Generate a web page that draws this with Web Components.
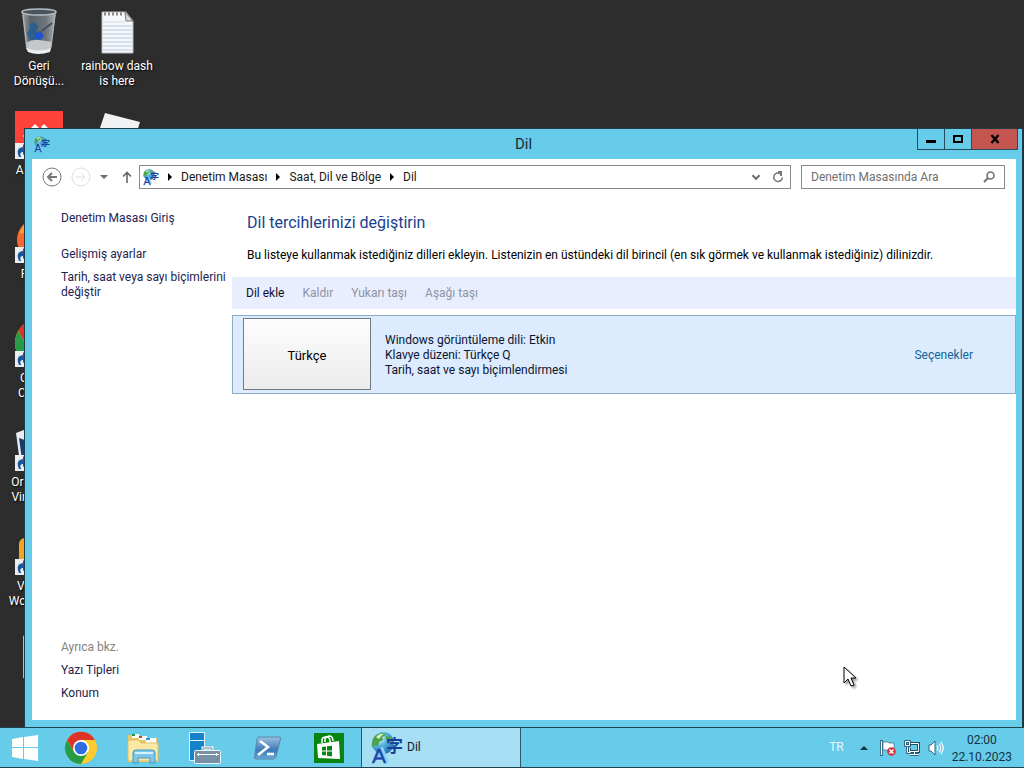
<!DOCTYPE html>
<html lang="tr">
<head>
<meta charset="utf-8">
<title>Dil</title>
<style>
  html, body {
    height: 100%;
    margin: 0;
    overflow: hidden;
  }
  body {
    font: 12px/15px Roboto, "Noto Sans", sans-serif;
    color: #000;
    background: #2d2d2d;
  }
</style>
</head>
<body>
<desktop-screen>
  <desktop-icon icon="bin">Geri Dönüşü...</desktop-icon>
  <desktop-icon icon="anydesk" shortcut>AnyDesk</desktop-icon>
  <desktop-icon icon="firefox" shortcut>Firefox</desktop-icon>
  <desktop-icon icon="chrome" shortcut>Google Chrome</desktop-icon>
  <desktop-icon icon="vbox" shortcut>Oracle VM VirtualBox</desktop-icon>
  <desktop-icon icon="vmware" shortcut>VMware Workstati...</desktop-icon>
  <desktop-icon icon="frame"></desktop-icon>
  <desktop-icon icon="notes">rainbow dash is here</desktop-icon>
  <desktop-icon icon="sheet"></desktop-icon>

  <app-window slot="window" heading="Dil" icon="lang">
    <address-bar slot="nav"></address-bar>
    <side-panel slot="side"></side-panel>
    <language-page></language-page>
  </app-window>

  <mouse-pointer slot="window"></mouse-pointer>

  <task-bar slot="bar">
    <task-button icon="chrome" label="Google Chrome"></task-button>
    <task-button icon="explorer" label="Dosya Gezgini"></task-button>
    <task-button icon="server" label="Sunucu Yöneticisi"></task-button>
    <task-button icon="powershell" label="PowerShell"></task-button>
    <task-button icon="store" label="Mağaza"></task-button>
    <task-button icon="lang" label="Dil" active>Dil</task-button>
    <system-tray slot="tray"></system-tray>
  </task-bar>
</desktop-screen>

<script>
const ICONS = {
  lang: /*html*/`<svg viewBox="0 0 32 32">
    <defs><radialGradient id="g" cx=".35" cy=".3" r=".8"><stop offset="0" stop-color="#e8fbff"/><stop offset=".4" stop-color="#58b4e0"/><stop offset="1" stop-color="#1b65ab"/></radialGradient></defs>
    <circle cx="12" cy="11" r="11" fill="url(#g)"/>
    <path d="M3 5q4-4 9-4l3 2-4 2 1 3-4 2-1 4-4-1-2 3q-1-5 2-11zM15 4l5 1 2 4-4 1-3-2z" fill="#4ba548"/>
    <path d="M5 5q4-4 8-3-4 2-5 5z" fill="#dff5cb"/>
    <path d="M4 30L10 15h2l6 15h-3l-7-5z" fill="#8fd0ee"/>
    <text x="15" y="20" font-family="Noto Sans CJK JP, sans-serif" font-size="17" font-weight="700" fill="#173f9b">字</text>
    <text x="1" y="31" font-family="Liberation Sans, sans-serif" font-size="21" fill="#1747ad" stroke="#1747ad" stroke-width=".5">A</text>
  </svg>`,
  bin: /*html*/`<svg viewBox="0 0 48 48">
    <defs><linearGradient id="b"><stop offset="0" stop-color="#9ba4ab"/><stop offset=".25" stop-color="#596169"/><stop offset=".7" stop-color="#6e767c"/><stop offset="1" stop-color="#aab0b5"/></linearGradient></defs>
    <path d="M7 5l4 37q13 6 25 0l5-37z" fill="url(#b)"/>
    <path d="M15 17l5-2 3 5-2 5 5-1 2 6-6 4-7-1-3-7 3-4z" fill="#2d5f8d"/>
    <path d="M20 26l6-1 3 4-4 4-5-2z" fill="#1f50d0"/>
    <path d="M27 24l10-8" stroke="#41505d" stroke-width="2"/>
    <path d="M11 36q6-4 13-3t13 2l-2 7q-12 5-23 0z" fill="#c4c8cb"/>
    <path d="M11 41q13 5 25 0l-1 4q-12 4-22 0z" fill="#eceeef"/>
    <ellipse cx="24" cy="5" rx="17" ry="3" fill="#49545d" stroke="#b4bcc1" stroke-width="1.500"/>
    <path d="M8 8l4 33M40 8l-4 33" stroke="#b4bbc0" fill="none"/>
  </svg>`,
  notes: /*html*/`<svg viewBox="0 0 48 48">
    <path d="M9 5h24l7 9v32H9z" fill="#f6f8fb" stroke="#b5bac0"/>
    <path d="M10 19h29M10 23h29M10 27h29M10 31h29M10 35h29M10 39h29M10 43h29" stroke="#b7c9dd"/>
    <path d="M10 15h22" stroke="#cfdae6"/>
    <path d="M32 5l1 9h7z" fill="#dcdcdc" stroke="#777"/>
    <path d="M11 7h20" stroke="#888" stroke-width="3" stroke-dasharray="2 2"/>
  </svg>`,
  sheet: /*html*/`<svg viewBox="0 0 48 48"><path d="M12 2l35 9-5 16-36-7z" fill="#f1f2f3"/></svg>`,
  anydesk: /*html*/`<svg viewBox="0 0 48 48"><path d="M0 0h48v48H0z" fill="#fc423b"/><path d="M20 13l12 12-12 12L8 25z" fill="#fff"/><path d="M26 16l3-3 12 12-12 12-3-3 9-9z" fill="#fff"/></svg>`,
  firefox: /*html*/`<svg viewBox="0 0 48 48"><circle cx="24" cy="25" r="22" fill="#f9692b"/><path d="M4 19Q8 8 17 3l3 12z" fill="#ff9b35"/><circle cx="26" cy="27" r="13" fill="#7542c9"/></svg>`,
  chrome: /*html*/`<svg viewBox="0 0 32 32">
    <circle cx="16" cy="16" r="16" fill="#ffcb2d"/>
    <path d="M16 8H30A16 16 0 0 0 2.140 8l7 12z" fill="#dc3528"/>
    <path d="M2.140 8A16 16 0 0 0 16 32l7-12-7-1-7 1z" fill="#279b46"/>
    <circle cx="16" cy="16" r="8" fill="#fff"/><circle cx="16" cy="16" r="6.300" fill="#2f6de0"/>
  </svg>`,
  vbox: /*html*/`<svg viewBox="0 0 48 48"><path d="M1 10L24 1l23 9-4 30-19 7-19-7z" fill="#e9edf2"/><path d="M4 15l20 7v22L7 37z" fill="#173e73"/><path d="M44 15l-20 7v22l17-7z" fill="#2868a6"/></svg>`,
  vmware: /*html*/`<svg viewBox="0 0 48 48"><rect x="4" y="11" width="40" height="36" rx="6" fill="#f4a51f"/><rect x="12" y="18" width="24" height="20" fill="#fff"/></svg>`,
  frame: /*html*/`<svg viewBox="0 0 48 48"><path d="M8.500 5v42h30V5z" fill="#343434" stroke="#bbb"/></svg>`,
  explorer: /*html*/`<svg viewBox="0 0 32 32">
    <path d="M1 5V3h12l1 3h16v24H1z" fill="#e9c868"/><path d="M5 2h7v4H5z" fill="#fff"/><path d="M5 2h3v2H5z" fill="#239149"/>
    <path d="M12 4h8v4h-8z" fill="#fff"/><path d="M12 4h3v2h-3z" fill="#d43b29"/><path d="M19 6h10v5H19z" fill="#fff"/><path d="M19 6h4v2h-4z" fill="#2a9bd3"/>
    <path d="M1 8h11l2 3h17v18H1z" fill="#fae9a5" stroke="#dfbd66"/>
    <path d="M6 31V21q0-3 3-3h16q3 0 3 3v10h-5v-5H11v5z" fill="#7fc6e8" stroke="#4698c6"/>
    <path d="M8 20h18v2H8z" fill="#d6f2fc"/>
  </svg>`,
  server: /*html*/`<svg viewBox="0 0 32 32">
    <path d="M.500.500h15v28h-15z" fill="#1682cc" stroke="#e3f5fd"/><path d="M1 8.500h14" stroke="#e3f5fd"/>
    <path d="M14 19v-3h9v3" fill="none" stroke="#fff" stroke-width="3"/><path d="M14 19v-3h9v3" fill="none" stroke="#6f8899"/>
    <rect x="5.500" y="18.500" width="26" height="13" rx="1" fill="#7890a5" stroke="#eef8fc"/><path d="M8 22.500h22M9.500 21v3M27.500 21v3" stroke="#fff"/>
  </svg>`,
  powershell: /*html*/`<svg viewBox="0 0 32 32">
    <defs><linearGradient id="p" x2="0" y2="1"><stop offset="0" stop-color="#9cc0df"/><stop offset=".6" stop-color="#3a7ab8"/><stop offset="1" stop-color="#6aa9d8"/></linearGradient></defs>
    <path d="M8 5h20q2 0 1.500 2L25 25q-1 2-3 2H5q-2 0-1.500-2L6 7q.500-2 2-2z" fill="url(#p)" stroke="#5a88ac"/>
    <path d="M9 9l8 6-10 8M16 22h7" fill="none" stroke="#fff" stroke-width="2.500"/>
  </svg>`,
  store: /*html*/`<svg viewBox="0 0 32 32">
    <path d="M1 1h30v30H1z" fill="#078511"/><path d="M4 12l22-3 1 18-22-1z" fill="#fff"/>
    <path d="M9 11V8q0-3 4-3t4 4v2M12 10V7q0-2 4-3 4 0 4 5" fill="none" stroke="#fff" stroke-width="1.500"/>
    <path d="M9 15l4-.500v4H9zM14 14.300l5-.600v4.800h-5zM9 19.500h4v4L9 23zM14 19.500h5v5l-5-.700z" fill="#078511"/>
  </svg>`,
  start: /*html*/`<svg viewBox="0 0 28 28"><path d="M1 5l11-2v10H1zM13 3l14-2v12H13zM1 14h11v11L1 23zM13 14h14v13l-14-2z" fill="#fff"/></svg>`,
  shortcut: /*html*/`<svg viewBox="0 0 16 16"><path d="M0 0h16v16H0z" fill="#e9edf2"/><path d="M4 14q-4-9 4-10V1l6 6-6 5V9q-4 0-2 5z" fill="#1c559f"/></svg>`,
  back: /*html*/`<svg viewBox="0 0 20 20" fill="none" stroke="#777"><circle cx="10" cy="10" r="9"/><path d="M15 10H6M10 6l-4 4 4 4" stroke-width="2"/></svg>`,
  forward: /*html*/`<svg viewBox="0 0 20 20" fill="none" stroke="#dedede"><circle cx="10" cy="10" r="9"/><path d="M5 10h9M10 6l4 4-4 4"/></svg>`,
  drop: /*html*/`<svg viewBox="0 0 8 8"><path d="M0 2h8L4 6z" fill="#6c6c6c"/></svg>`,
  up: /*html*/`<svg viewBox="0 0 12 12" fill="none" stroke="#666" stroke-width="1.600"><path d="M6 12V1M2 5.500l4-4 4 4"/></svg>`,
  arrow: /*html*/`<svg viewBox="0 0 8 8"><path d="M2 0l4 4-4 4z"/></svg>`,
  chevron: /*html*/`<svg viewBox="0 0 10 10" fill="none" stroke="#6c6c6c" stroke-width="1.600"><path d="M2 3.500l3 3 3-3"/></svg>`,
  refresh: /*html*/`<svg viewBox="0 0 12 12"><path d="M8 2.500A4.300 4.300 0 1 0 10.300 6.500" fill="none" stroke="#777" stroke-width="1.500"/><path d="M6 0h4v5H8V3H6z" fill="#777"/></svg>`,
  search: /*html*/`<svg viewBox="0 0 12 12" fill="none" stroke="#707070"><circle cx="7.500" cy="4.500" r="3.500" stroke-width="1.600"/><path d="M5 7L1 11" stroke-width="2"/></svg>`,
  min: /*html*/`<svg viewBox="0 0 12 12"><path d="M1 7h10v3H1z"/></svg>`,
  max: /*html*/`<svg viewBox="0 0 12 12"><path d="M2 3h8v6H2z" fill="none" stroke="#000" stroke-width="2"/></svg>`,
  close: /*html*/`<svg viewBox="0 0 12 12"><path d="M2.500 2l7 8M9.500 2l-7 8" stroke="#000" stroke-width="2.400"/></svg>`,
  trayup: /*html*/`<svg viewBox="0 0 8 8"><path d="M0 6l4-4 4 4z" fill="#12303d"/></svg>`,
  flag: /*html*/`<svg viewBox="0 0 16 16"><path d="M1.500 0v16" stroke="#29546b" stroke-width="2.500"/><path d="M1.500 1v14" stroke="#fff"/><path d="M3 2h5l1 1h5v8H9L8 10H3z" fill="#fff" stroke="#39687d" stroke-width=".700"/><circle cx="11.500" cy="11.500" r="4.300" fill="#d52f3f"/><path d="M9.500 9.500l4 4M13.500 9.500l-4 4" stroke="#fff" stroke-width="1.500"/></svg>`,
  network: /*html*/`<svg viewBox="0 0 16 16"><path d="M6 3.500h8.500v8H5.500V8" fill="#67cbea" stroke="#234d63" stroke-width="3"/><path d="M6 14.500h9M10.500 12v2M3.500 5v7.500h3" fill="none" stroke="#234d63" stroke-width="2.500"/><path d="M6 3.500h8.500v8H5.500V8M6 14.500h9M10.500 12v2M3.500 5v7.500h3" fill="none" stroke="#fff"/><path d="M1.500 1.500h4v4h-4z" fill="#67cbea" stroke="#234d63" stroke-width="2.500"/><path d="M1.500 1.500h4v4h-4z" fill="none" stroke="#fff"/></svg>`,
  sound: /*html*/`<svg viewBox="0 0 16 16"><path d="M1 5h2l4-4v14l-4-4H1z" fill="#fff" stroke="#37667c"/><path d="M9 5.500q2 2.500 0 5M11 3.500q3.500 4.500 0 9M13 2q4.500 6 0 12" fill="none" stroke="#fff" stroke-width="1.200"/></svg>`,
  cursor: /*html*/`<svg viewBox="0 0 14 22"><path d="M1 1v16l4-4 3 7 3-1-3-7h5z" fill="#fff" stroke="#000"/></svg>`
}

class UiIcon extends HTMLElement {

  constructor () {
    super()
    this.shadow = this.attachShadow({ mode: 'open' })
  }

  connectedCallback () {
    this.shadow.innerHTML =
    /*html*/`
    <style>
      :host {
        display: block;
        flex: none;
        width: var(--size, 16px);
        height: var(--size, 16px);
      }
      svg {
        display: block;
        width: 100%;
        height: 100%;
        overflow: visible;
      }
    </style>
    ${ICONS[this.getAttribute('name')]}
    `
  }
}

class DesktopScreen extends HTMLElement {

  constructor () {
    super()
    this.shadow = this.attachShadow({ mode: 'open' })
  }

  connectedCallback () {
    this.shadow.innerHTML =
    /*html*/`
    <style>
      :host {
        display: flex;
        flex-direction: column;
        height: 100vh;
      }
      main {
        flex: 1;
        min-height: 0;
        position: relative;
      }
      .icons {
        display: grid;
        grid-auto-flow: column;
        grid-template-rows: repeat(7, 104px);
        grid-auto-columns: 78px;
        padding-top: 7px;
      }
    </style>
    <main>
      <div class="icons"><slot></slot></div>
      <slot name="window"></slot>
    </main>
    <slot name="bar"></slot>
    `
  }
}

class DesktopIcon extends HTMLElement {

  constructor () {
    super()
    this.shadow = this.attachShadow({ mode: 'open' })
  }

  connectedCallback () {
    const badge = this.hasAttribute('shortcut') ? '<ui-icon class="badge" name="shortcut"></ui-icon>' : ''
    this.shadow.innerHTML =
    /*html*/`
    <style>
      :host {
        display: flex;
        flex-direction: column;
        align-items: center;
        gap: 4px;
        padding: 0 2px;
        color: #fff;
        text-align: center;
        text-shadow: 1px 1px 2px #000;
      }
      .picture {
        --size: 48px;
        position: relative;
      }
      .badge {
        --size: 16px;
        position: absolute;
        left: 0;
        bottom: 0;
      }
    </style>
    <div class="picture"><ui-icon name="${this.getAttribute('icon')}"></ui-icon>${badge}</div>
    <slot></slot>
    `
  }
}

class AppWindow extends HTMLElement {

  constructor () {
    super()
    this.shadow = this.attachShadow({ mode: 'open' })
  }

  connectedCallback () {
    this.shadow.innerHTML =
    /*html*/`
    <style>
      :host {
        position: absolute;
        inset: 129px 2px 0 25px;
        display: flex;
        flex-direction: column;
        background: #67cbea;
        box-shadow: 0 0 0 1px #223c47;
      }
      header {
        display: grid;
        grid-template-columns: 1fr auto 1fr;
        height: 30px;
        padding: 0 4px;
      }
      header > ui-icon {
        align-self: center;
        margin-left: 5px;
      }
      h1 {
        margin: 0;
        align-self: center;
        font-size: 15px;
        font-weight: 400;
        color: #1b2b33;
      }
      .controls {
        display: flex;
        justify-content: flex-end;
        height: 21px;
      }
      button {
        --size: 12px;
        display: flex;
        justify-content: center;
        align-items: center;
        box-sizing: border-box;
        width: 27px;
        padding: 0;
        border: 1px solid #234c5c;
        border-width: 0 0 1px 1px;
        background: none;
      }
      .close {
        width: 47px;
        border-right-width: 1px;
        background: #c5564f;
      }
      .body {
        flex: 1;
        min-height: 0;
        display: grid;
        grid-template: auto 1fr / 200px 1fr;
        margin: 0 6px 7px 7px;
        background: #fff;
      }
      .nav {
        grid-column: 1 / -1;
      }
    </style>
    <header>
      <ui-icon name="${this.getAttribute('icon')}"></ui-icon>
      <h1>${this.getAttribute('heading')}</h1>
      <div class="controls">
        <button aria-label="Simge durumuna küçült"><ui-icon name="min"></ui-icon></button>
        <button aria-label="Ekranı kapla"><ui-icon name="max"></ui-icon></button>
        <button class="close" aria-label="Kapat"><ui-icon name="close"></ui-icon></button>
      </div>
    </header>
    <div class="body">
      <div class="nav"><slot name="nav"></slot></div>
      <slot name="side"></slot>
      <slot></slot>
    </div>
    `
  }
}

class AddressBar extends HTMLElement {

  constructor () {
    super()
    this.shadow = this.attachShadow({ mode: 'open' })
  }

  connectedCallback () {
    this.shadow.innerHTML =
    /*html*/`
    <style>
      :host {
        display: flex;
        align-items: center;
        gap: 10px;
        padding: 6px 11px 0 10px;
      }
      button {
        padding: 0;
        border: 0;
        background: none;
      }
      .history {
        display: flex;
        align-items: center;
        gap: 9px;
        margin-right: 3px;
        --size: 20px;
      }
      .small {
        --size: 8px;
      }
      .medium {
        --size: 12px;
        margin-right: -4px;
      }
      nav, label {
        display: flex;
        align-items: center;
        box-sizing: border-box;
        height: 24px;
        border: 1px solid #8a8a8a;
      }
      nav {
        flex: 1;
        gap: 7px;
        padding: 0 6px 0 3px;
      }
      nav a {
        color: #1a1a1a;
        text-decoration: none;
      }
      .tools {
        display: flex;
        gap: 10px;
        margin-left: auto;
        --size: 12px;
      }
      label {
        width: 204px;
        padding: 0 9px;
        --size: 12px;
      }
      input {
        flex: 1;
        min-width: 0;
        padding: 0;
        border: 0;
        outline: 0;
        background: none;
        font: inherit;
      }
      input::placeholder {
        color: #707070;
      }
    </style>
    <div class="history">
      <button aria-label="Geri"><ui-icon name="back"></ui-icon></button>
      <button aria-label="İleri" disabled><ui-icon name="forward"></ui-icon></button>
      <button class="small" aria-label="Son konumlar"><ui-icon name="drop"></ui-icon></button>
    </div>
    <button class="medium" aria-label="Yukarı"><ui-icon name="up"></ui-icon></button>
    <nav>
      <ui-icon name="lang"></ui-icon>
      <ui-icon class="small" name="arrow"></ui-icon>
      <a href="#">Denetim Masası</a>
      <ui-icon class="small" name="arrow"></ui-icon>
      <a href="#">Saat, Dil ve Bölge</a>
      <ui-icon class="small" name="arrow"></ui-icon>
      <a href="#">Dil</a>
      <div class="tools">
        <button aria-label="Önceki konumlar"><ui-icon name="chevron"></ui-icon></button>
        <button aria-label="Yenile"><ui-icon name="refresh"></ui-icon></button>
      </div>
    </nav>
    <label>
      <input type="text" placeholder="Denetim Masasında Ara" aria-label="Denetim Masasında Ara">
      <ui-icon name="search"></ui-icon>
    </label>
    `
  }
}

class SidePanel extends HTMLElement {

  constructor () {
    super()
    this.shadow = this.attachShadow({ mode: 'open' })
  }

  connectedCallback () {
    this.shadow.innerHTML =
    /*html*/`
    <style>
      :host {
        display: flex;
        flex-direction: column;
        gap: 8px;
        padding: 22px 4px 19px 29px;
      }
      a {
        color: #1e2352;
        text-decoration: none;
      }
      .home {
        margin-bottom: 13px;
      }
      .also {
        margin-top: auto;
        color: #838383;
      }
    </style>
    <a class="home" href="#">Denetim Masası Giriş</a>
    <a href="#">Gelişmiş ayarlar</a>
    <a href="#">Tarih, saat veya sayı biçimlerini değiştir</a>
    <span class="also">Ayrıca bkz.</span>
    <a href="#">Yazı Tipleri</a>
    <a href="#">Konum</a>
    `
  }
}

class LanguagePage extends HTMLElement {

  constructor () {
    super()
    this.shadow = this.attachShadow({ mode: 'open' })
  }

  connectedCallback () {
    this.shadow.innerHTML =
    /*html*/`
    <style>
      :host {
        display: block;
        min-width: 0;
      }
      h2 {
        margin: 23px 15px 14px;
        font-size: 16px;
        line-height: 22px;
        font-weight: 400;
        color: #19408c;
      }
      p {
        margin: 0 15px 14px;
      }
      .toolbar {
        display: flex;
        gap: 18px;
        height: 32px;
        padding: 0 14px;
        background: #e9eefe;
      }
      button {
        font: inherit;
      }
      .toolbar button {
        padding: 0;
        border: 0;
        background: none;
        color: #101030;
      }
      .toolbar button:disabled {
        color: #8e93a2;
      }
    </style>
    <h2>Dil tercihlerinizi değiştirin</h2>
    <p>Bu listeye kullanmak istediğiniz dilleri ekleyin. Listenizin en üstündeki dil birincil (en sık görmek ve kullanmak istediğiniz) dilinizdir.</p>
    <div class="toolbar">
      <button>Dil ekle</button>
      <button disabled>Kaldır</button>
      <button disabled>Yukarı taşı</button>
      <button disabled>Aşağı taşı</button>
    </div>
    <language-row name="Türkçe">
      <div>Windows görüntüleme dili: Etkin</div>
      <div>Klavye düzeni: Türkçe Q</div>
      <div>Tarih, saat ve sayı biçimlendirmesi</div>
    </language-row>
    `
  }
}

class LanguageRow extends HTMLElement {

  constructor () {
    super()
    this.shadow = this.attachShadow({ mode: 'open' })
  }

  connectedCallback () {
    this.shadow.innerHTML =
    /*html*/`
    <style>
      :host {
        display: flex;
        align-items: center;
        gap: 14px;
        margin-top: 6px;
        padding: 2px 42px 3px 10px;
        border: 1px solid #8cabc4;
        background: #dcebfd;
        color: #0b1430;
      }
      button {
        width: 128px;
        height: 72px;
        padding: 2px 0 0;
        border: 1px solid #707a84;
        background: linear-gradient(#fdfdfd, #ececec);
        font: inherit;
        font-size: 13px;
        color: #000;
      }
      div, a {
        padding-top: 2px;
      }
      a {
        margin-left: auto;
        color: #0e639c;
        text-decoration: none;
      }
    </style>
    <button>${this.getAttribute('name')}</button>
    <div><slot></slot></div>
    <a href="#">Seçenekler</a>
    `
  }
}

class TaskBar extends HTMLElement {

  constructor () {
    super()
    this.shadow = this.attachShadow({ mode: 'open' })
  }

  connectedCallback () {
    this.shadow.innerHTML =
    /*html*/`
    <style>
      :host {
        position: relative;
        display: flex;
        box-sizing: border-box;
        height: 41px;
        border: 1px solid #21424f;
        border-width: 1px 0;
        background: #67cbea;
      }
      .start {
        --size: 28px;
        width: 50px;
        padding: 0 11px;
        border: 0;
        background: none;
      }
    </style>
    <button class="start" aria-label="Başlat"><ui-icon name="start"></ui-icon></button>
    <slot></slot>
    <slot name="tray"></slot>
    `
  }
}

class TaskButton extends HTMLElement {

  constructor () {
    super()
    this.shadow = this.attachShadow({ mode: 'open' })
  }

  connectedCallback () {
    this.shadow.innerHTML =
    /*html*/`
    <style>
      :host {
        display: flex;
        width: 62px;
      }
      :host([active]) {
        width: 160px;
        margin-left: 1px;
      }
      button {
        --size: 32px;
        flex: 1;
        display: flex;
        justify-content: center;
        align-items: center;
        gap: 4px;
        padding: 0;
        border: 0;
        background: none;
        font: inherit;
        color: #10202a;
      }
      :host([active]) button {
        justify-content: flex-start;
        padding-left: 9px;
        border: 1px solid #2d5868;
        border-width: 0 1px;
        background: #a6def4;
      }
    </style>
    <button aria-label="${this.getAttribute('label')}">
      <ui-icon name="${this.getAttribute('icon')}"></ui-icon>
      <slot></slot>
    </button>
    `
  }
}

class SystemTray extends HTMLElement {

  constructor () {
    super()
    this.shadow = this.attachShadow({ mode: 'open' })
  }

  connectedCallback () {
    this.shadow.innerHTML =
    /*html*/`
    <style>
      :host {
        display: flex;
        align-items: center;
        gap: 8px;
        margin-left: auto;
        padding-right: 12px;
      }
      button {
        padding: 0;
        border: 0;
        background: none;
        font: inherit;
        color: #e9f8fd;
      }
      .lang {
        margin-right: 8px;
      }
      .more {
        --size: 8px;
        margin-right: 4px;
      }
      time {
        text-align: center;
        line-height: 17px;
        padding-top: 2px;
        color: #123341;
      }
    </style>
    <button class="lang">TR</button>
    <button class="more" aria-label="Gizli simgeleri göster"><ui-icon name="trayup"></ui-icon></button>
    <button aria-label="İşlem Merkezi"><ui-icon name="flag"></ui-icon></button>
    <button aria-label="Ağ"><ui-icon name="network"></ui-icon></button>
    <button aria-label="Ses"><ui-icon name="sound"></ui-icon></button>
    <time datetime="2023-10-22T02:00">02:00<br>22.10.2023</time>
    `
  }
}

class MousePointer extends HTMLElement {

  constructor () {
    super()
    this.shadow = this.attachShadow({ mode: 'open' })
  }

  connectedCallback () {
    this.shadow.innerHTML =
    /*html*/`
    <style>
      :host {
        position: absolute;
        left: 843px;
        top: 666px;
        width: 14px;
        height: 22px;
        filter: drop-shadow(2px 2px 1px #0006);
      }
    </style>
    ${ICONS.cursor}
    `
  }
}

customElements.define('ui-icon', UiIcon)
customElements.define('desktop-icon', DesktopIcon)
customElements.define('address-bar', AddressBar)
customElements.define('side-panel', SidePanel)
customElements.define('language-row', LanguageRow)
customElements.define('language-page', LanguagePage)
customElements.define('app-window', AppWindow)
customElements.define('task-button', TaskButton)
customElements.define('system-tray', SystemTray)
customElements.define('task-bar', TaskBar)
customElements.define('mouse-pointer', MousePointer)
customElements.define('desktop-screen', DesktopScreen)
</script>
</body>
</html>
